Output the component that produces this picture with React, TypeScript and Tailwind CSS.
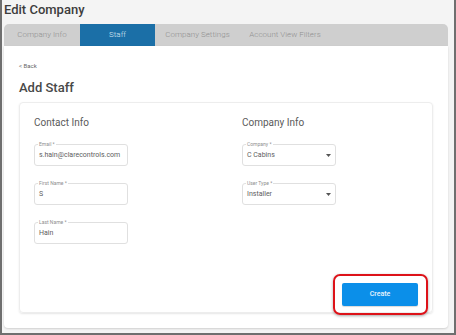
import React from "react";

const tabs = [
  { label: "Company Info", width: "w-[76px]", active: false },
  { label: "Staff", width: "w-[75px]", active: true },
  { label: "Company Settings", width: "w-[85px]", active: false },
  { label: "Account View Filters", width: "w-[90px]", active: false },
];

function Field({ label, value, select }: { label: string; value: string; select?: boolean }) {
  return (
    <div className="relative w-[94px] h-[22px] border border-[#e0e0e0] rounded-[3px] bg-white">
      <span className="absolute -top-[4px] left-[3px] bg-white px-[1px] text-[5px] leading-[6px] text-[#8f8f8f]">
        {label}
      </span>
      <div className="pl-[4px] text-[7px] leading-[20px] text-[#606060]">{value}</div>
      {select && (
        <svg className="absolute right-[4px] top-[9px]" width="5" height="3" viewBox="0 0 5 3">
          <polygon points="0,0 5,0 2.5,3" fill="#555" />
        </svg>
      )}
    </div>
  );
}

export default function App() {
  return (
    <div
      className="relative w-[456px] h-[335px] overflow-hidden bg-[#f4f4f4] border-x-2 border-b-2 border-[#6f6f6f] flex flex-col"
      style={{ fontFamily: "Roboto, 'Liberation Sans', sans-serif" }}
    >
      <div className="h-[24px] pl-[2px] pt-[2px] text-[13px] leading-[16px] font-medium text-[#3d3d3d]">
        Edit Company
      </div>

      <div className="ml-[2px] mr-[6px] h-[22px] flex bg-[#cfcfcf] rounded-t-[5px] overflow-hidden">
        {tabs.map((tab) => (
          <div
            key={tab.label}
            className={`${tab.width} flex items-center justify-center text-[8px] font-light ${
              tab.active ? "bg-[#1b6fa7] text-[#dce9f3]" : "text-[#8f8f8f]"
            }`}
          >
            {tab.label}
          </div>
        ))}
      </div>

      <div className="ml-[2px] mr-[6px] h-[282px] bg-white rounded-b-[4px] shadow-[0_1px_2px_rgba(0,0,0,0.15)] px-[15px] pt-[16px]">
        <div className="text-[6px] leading-[8px] text-[#666]">&lt; Back</div>
        <div className="mt-[10px] text-[13px] leading-[16px] font-medium text-[#484848]">Add Staff</div>

        <div className="mt-[6px] h-[211px] border border-[#ededed] rounded-[4px] shadow-[0_1px_2px_rgba(0,0,0,0.1)] flex flex-col">
          <div className="grid grid-cols-2">
            <div className="pl-[14px] pt-[13px]">
              <div className="text-[10px] leading-[14px] text-[#5a5a5a]">Contact Info</div>
              <div className="mt-[14px] flex flex-col gap-[17px]">
                <Field label="Email *" value="s.hain@clarecontrols.com" />
                <Field label="First Name *" value="S" />
                <Field label="Last Name *" value="Hain" />
              </div>
            </div>
            <div className="pl-[16px] pt-[13px]">
              <div className="text-[10px] leading-[14px] text-[#5a5a5a]">Company Info</div>
              <div className="mt-[14px] flex flex-col gap-[17px]">
                <Field label="Company *" value="C Cabins" select />
                <Field label="User Type *" value="Installer" select />
              </div>
            </div>
          </div>
          <div className="mt-auto flex justify-end pr-[14px] pb-[6px]">
            <button className="w-[76px] h-[23px] bg-[#0b8fe9] rounded-[2px] text-[#e8f4fd] text-[7px] font-medium shadow-[0_1px_1px_rgba(0,0,0,0.15)]">
              Create
            </button>
          </div>
        </div>
      </div>

      <div className="absolute left-[331px] top-[274px] w-[95px] h-[41px] border-2 border-[#dd1219] rounded-[7px] shadow-[0_1px_3px_rgba(0,0,0,0.35)]" />
    </div>
  );
}
